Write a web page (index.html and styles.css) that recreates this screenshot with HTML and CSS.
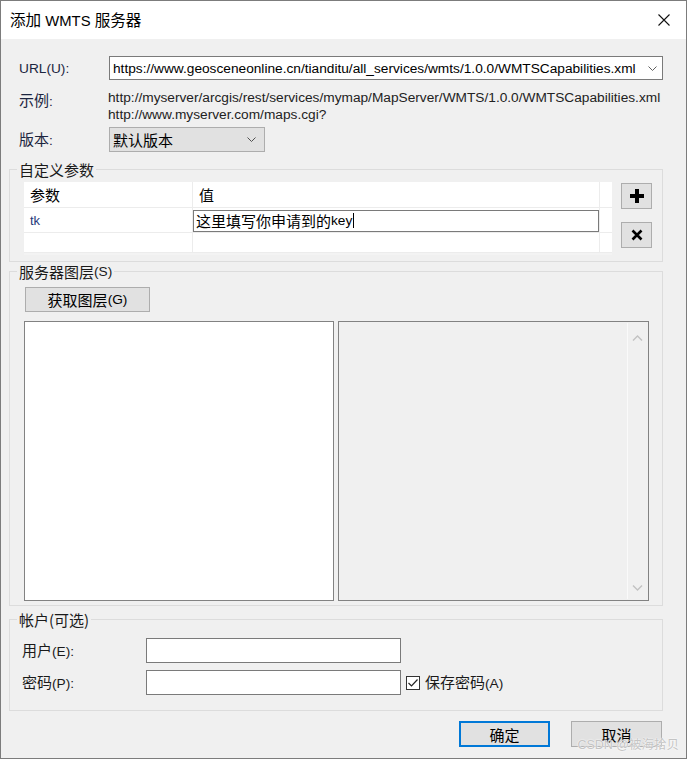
FILE: index.html
```html
<!DOCTYPE html>
<html>
<head>
<meta charset="utf-8">
<title>添加 WMTS 服务器</title>
<link rel="stylesheet" href="styles.css">
</head>
<body>
<div class="window">
  <div class="titlebar">
    <span class="title"><span class="zh">添加</span> WMTS <span class="zh">服务器</span></span>
    <span class="close">
      <svg width="12" height="12" viewBox="0 0 12 12"><path d="M0.5 0.5L11.5 11.5M11.5 0.5L0.5 11.5" stroke="#111" stroke-width="1.1" fill="none"/></svg>
    </span>
  </div>
  <div class="body">
    <div class="row row-url">
      <div class="lbl">URL(U):</div>
      <div class="combo combo-url">
        <span class="combo-text">https://www.geosceneonline.cn/tianditu/all_services/wmts/1.0.0/WMTSCapabilities.xml</span>
        <svg class="chev" width="9" height="5" viewBox="0 0 9 5"><path d="M0.5 0.5L4.5 4.5L8.5 0.5" stroke="#606060" fill="none"/></svg>
      </div>
    </div>
    <div class="row row-ex">
      <div class="lbl"><span class="zh">示例</span>:</div>
      <div class="examples">
        <div>http://myserver/arcgis/rest/services/mymap/MapServer/WMTS/1.0.0/WMTSCapabilities.xml</div>
        <div>http://www.myserver.com/maps.cgi?</div>
      </div>
    </div>
    <div class="row row-ver">
      <div class="lbl"><span class="zh">版本</span>:</div>
      <div class="combo combo-ver">
        <span class="combo-text zh">默认版本</span>
        <svg class="chev" width="9" height="5" viewBox="0 0 9 5"><path d="M0.5 0.5L4.5 4.5L8.5 0.5" stroke="#505050" fill="none"/></svg>
      </div>
    </div>

    <fieldset class="group group-params">
      <legend><span class="zh">自定义参数</span></legend>
      <div class="params">
        <div class="ptable">
          <div class="cell hd"><span class="zh">参数</span></div>
          <div class="cell hd"><span class="zh">值</span></div>
          <div class="cell extra"></div>
          <div class="cell key">tk</div>
          <div class="cell val"><div class="edit"><span class="zh">这里填写你申请到的</span><span>key</span><span class="caret"></span></div></div>
          <div class="cell extra"></div>
          <div class="cell empty"></div>
          <div class="cell empty"></div>
          <div class="cell extra"></div>
        </div>
        <div class="side-btns">
          <div class="btn icon-btn">
            <svg width="16" height="16" viewBox="0 0 16 16"><path d="M6 1H10V6H15V10H10V15H6V10H1V6H6Z" fill="#000"/></svg>
          </div>
          <div class="btn icon-btn">
            <svg width="12" height="12" viewBox="0 0 12 12"><path d="M1.5 1.5L10.5 10.5M10.5 1.5L1.5 10.5" stroke="#000" stroke-width="2.6" fill="none"/></svg>
          </div>
        </div>
      </div>
    </fieldset>

    <fieldset class="group group-layers">
      <legend><span class="zh">服务器图层</span><span>(S)</span></legend>
      <div class="layers">
        <div class="btn get-btn"><span class="zh">获取图层</span><span>(G)</span></div>
        <div class="panes">
          <div class="pane list"></div>
          <div class="pane detail">
            <div class="scroll">
              <svg width="11" height="6" viewBox="0 0 11 6"><path d="M1 5.5L5.5 1L10 5.5" stroke="#c2c2c2" stroke-width="1.4" fill="none"/></svg>
              <svg width="11" height="6" viewBox="0 0 11 6"><path d="M1 0.5L5.5 5L10 0.5" stroke="#c2c2c2" stroke-width="1.4" fill="none"/></svg>
            </div>
          </div>
        </div>
      </div>
    </fieldset>

    <fieldset class="group group-account">
      <legend><span class="zh">帐户(可选)</span></legend>
      <div class="account">
        <div class="arow">
          <div class="alabel"><span class="zh">用户</span>(E):</div>
          <div class="input"></div>
        </div>
        <div class="arow">
          <div class="alabel"><span class="zh">密码</span>(P):</div>
          <div class="input"></div>
          <div class="check">
            <svg width="14" height="14" viewBox="0 0 14 14"><rect x="0.5" y="0.5" width="13" height="13" fill="#fff" stroke="#333"/><path d="M2.5 7L5.5 10L11.5 3.5" stroke="#222" stroke-width="1.2" fill="none"/></svg>
            <span class="check-text"><span class="zh">保存密码</span>(A)</span>
          </div>
        </div>
      </div>
    </fieldset>

    <div class="footer">
      <div class="btn dlg-btn default"><span class="zh">确定</span></div>
      <div class="btn dlg-btn"><span class="zh">取消</span></div>
    </div>
  </div>
  <div class="watermark">CSDN @<span class="zh">被海拾贝</span></div>
</div>
</body>
</html>
```
FILE: styles.css
```css
* { box-sizing: border-box; }
html, body { margin: 0; padding: 0; }
body {
  width: 687px;
  height: 759px;
  overflow: hidden;
  background: #fff;
  font-family: "Liberation Sans", "Noto Sans CJK SC", sans-serif;
  font-size: 13.7px;
  line-height: 17px;
  color: #1a1a1a;
}
.zh {
  font-family: "Noto Sans CJK SC", sans-serif;
  font-size: 15px;
  line-height: 17px;
}
.window {
  position: relative;
  width: 687px;
  height: 759px;
  border: 1px solid #7c7c7c;
  display: flex;
  flex-direction: column;
  background: #f0f0f0;
}
.titlebar {
  height: 38px;
  background: #fff;
  display: flex;
  align-items: center;
  justify-content: space-between;
  padding: 0 16px 0 9px;
  flex: none;
}
.title { font-size: 14.8px; color: #000; }
.title .zh { font-size: 15.6px; }
.close { display: flex; align-items: center; }

.body {
  flex: 1;
  padding: 0 23px 0 8px;
  display: flex;
  flex-direction: column;
}
.row { display: flex; margin-left: 10px; }
.lbl { width: 90px; flex: none; color: #1c2540; }
.row-url { margin-top: 17px; align-items: center; }
.row-ex { margin-top: 9px; }
.row-ex .lbl { padding-top: 2px; }
.row-ver { margin-top: 4px; align-items: center; }

.combo {
  height: 24px;
  display: flex;
  align-items: center;
  justify-content: space-between;
  border: 1px solid #7a7a7a;
  background: #fff;
  padding: 0 5px 0 3px;
}
.combo-url { flex: 1; }
.combo-text { color: #000; white-space: nowrap; }
.combo-ver {
  width: 156px;
  height: 25px;
  background: #e1e1e1;
  border-color: #adadad;
  padding: 0 8px 0 3px;
}
.examples { color: #222; white-space: nowrap; margin-left: -1px; }

.group {
  margin: 0;
  padding: 0;
  border: 1px solid #dcdcdc;
  min-width: 0;
}
.group legend {
  display: flex;
  align-items: center;
  height: 17px;
  padding: 0 2px;
  margin-left: 7px;
  line-height: 17px;
  color: #1a1a1a;
}
.group-params { margin-top: 9px; }
.params {
  display: flex;
  align-items: flex-start;
  gap: 9px;
  padding: 4px 10px 6px 14px;
}
.ptable {
  width: 588px;
  height: 73px;
  display: grid;
  grid-template-columns: 169px 407px 12px;
  grid-template-rows: 26px 25px 20px;
  background: #fff;
  border-bottom: 2px solid #f3f3f3;
}
.cell {
  border-right: 1px solid #ececec;
  border-bottom: 1px solid #ececec;
  display: flex;
  align-items: center;
  padding-left: 6px;
}
.cell.hd { color: #000; }
.cell.extra { border-right: none; padding: 0; }
.cell.key { color: #27397a; font-size: 13px; }
.cell.val { padding: 2px 0 1px 0; }
.edit {
  width: 100%;
  height: 22px;
  border: 1px solid #7a7a7a;
  display: flex;
  align-items: center;
  padding-left: 2px;
  color: #000;
}
.caret {
  display: inline-block;
  width: 1px;
  height: 15px;
  background: #000;
  margin-left: 1px;
}
.side-btns { display: flex; flex-direction: column; gap: 13px; margin-top: 1px; }
.btn {
  background: #e1e1e1;
  border: 1px solid #adadad;
  display: flex;
  align-items: center;
  justify-content: center;
  color: #000;
}
.icon-btn { width: 31px; height: 26px; }

.group-layers { margin-top: 1px; }
.layers { padding: 7px 13px 4px 14px; }
.get-btn { width: 125px; height: 25px; margin-left: 1px; }
.panes { display: flex; gap: 4px; margin-top: 9px; height: 280px; }
.pane { border: 1px solid #828282; }
.list { width: 310px; background: #fff; }
.detail {
  width: 311px;
  background: #f0f0f0;
  display: flex;
  justify-content: flex-end;
  padding: 1px;
}
.scroll {
  width: 20px;
  border-left: 1px solid #fafafa;
  display: flex;
  flex-direction: column;
  justify-content: space-between;
  align-items: center;
  padding: 12px 0 8px 0;
}

.group-account { margin-top: 5px; }
.account { padding: 10px 10px 15px 12px; display: flex; flex-direction: column; gap: 7px; }
.arow { display: flex; align-items: center; }
.alabel { width: 124px; flex: none; color: #1a1a1a; }
.input {
  width: 255px;
  height: 25px;
  background: #fff;
  border: 1px solid #7a7a7a;
}
.check {
  display: flex;
  align-items: center;
  gap: 5px;
  margin-left: 5px;
}
.check svg { flex: none; }

.footer {
  display: flex;
  justify-content: flex-end;
  gap: 21px;
  margin-top: 10px;
  padding-right: 1px;
}
.dlg-btn { width: 91px; height: 26px; }
.dlg-btn.default { border: 2px solid #0078d7; }

.watermark {
  position: absolute;
  right: 7px;
  bottom: 4px;
  color: #c4c4c4;
  font-size: 12.5px;
  text-shadow: 0 0 2px #fff, 0 0 1px #fff;
}
.watermark .zh { font-size: 12.5px; }
```
